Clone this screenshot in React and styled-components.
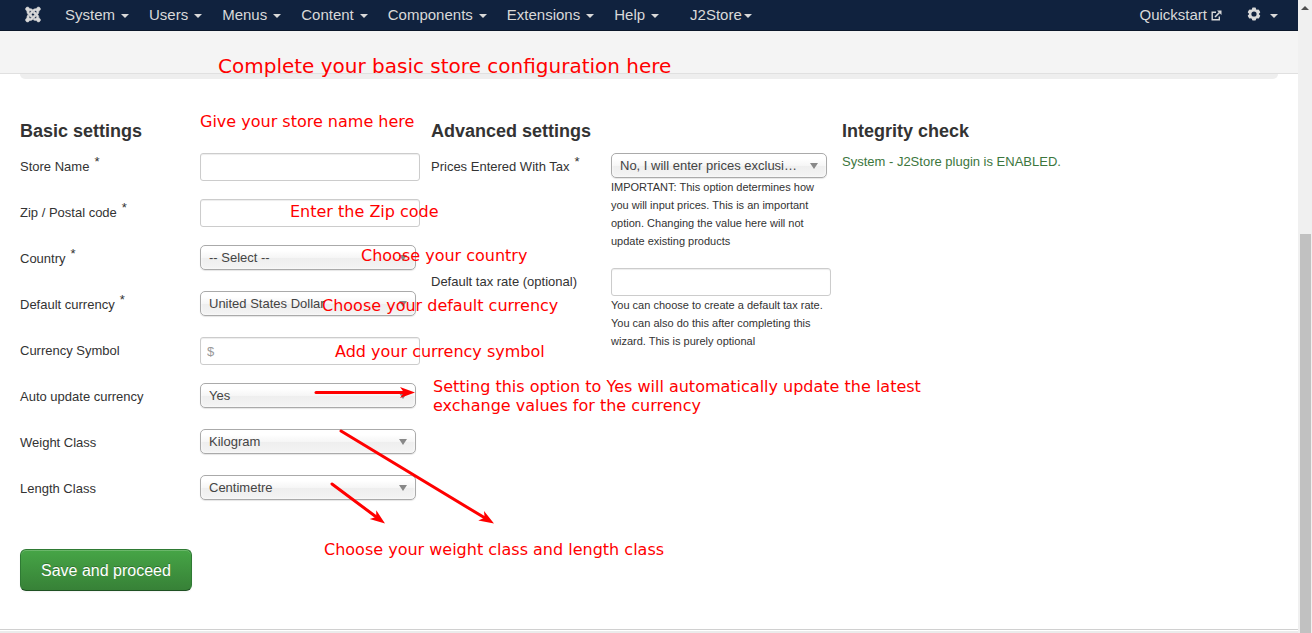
import React from "react";
import styled, { createGlobalStyle } from "styled-components";
import { FaJoomla } from "react-icons/fa";

const Global = createGlobalStyle`
  * { box-sizing: border-box; }
  body {
    margin: 0;
    background: #fff;
    color: #333;
    font: 13px/18px "Liberation Sans", Arial, sans-serif;
  }
`;

const Window = styled.div`
  position: relative;
  display: grid;
  grid-template-columns: minmax(0, 1fr) 14px;
  min-height: 100vh;
`;

const Page = styled.div`
  display: flex;
  flex-direction: column;
`;

const Navbar = styled.nav`
  display: flex;
  align-items: center;
  height: 31px;
  padding: 0 10px 0 25px;
  background: #10223e;
  border-bottom: 1px solid #0b172a;
  font-size: 15px;
`;

const Brand = styled.a`
  display: flex;
  justify-content: center;
  width: 16px;
  margin: 0 14px 2px 0;
  color: #d9d9d9;
  path {
    stroke: currentColor;
    stroke-width: 18px;
  }
`;

const NavLink = styled.a`
  display: flex;
  align-items: center;
  gap: ${(p) => p.$gap ?? 6}px;
  padding: 0 10px;
  color: #d9d9d9;
  text-decoration: none;
  white-space: nowrap;
`;

const MenuGroup = styled.div`
  display: flex;
  margin-left: ${(p) => (p.$push ? "auto" : `${p.$space ?? 0}px`)};
`;

const Caret = styled.span`
  margin-top: 2px;
  border: 4px solid transparent;
  border-top-color: currentColor;
  border-bottom: 0;
`;

const Subhead = styled.div`
  height: 43px;
  background: #f4f4f4;
  border-bottom: 1px solid #e0e0e0;
`;

const Main = styled.main`
  flex: 1;
  padding: 0 20px 38px;
`;

const ProgressWell = styled.div`
  height: 5px;
  margin-bottom: 43px;
  background: #eee;
  border-radius: 0 0 6px 6px;
`;

const Columns = styled.div`
  display: grid;
  grid-template-columns: 411fr 411fr 436fr;
`;

const Heading = styled.h4`
  margin: 0 0 13px;
  font-size: 18px;
  line-height: 18px;
`;

const FieldRow = styled.div`
  display: grid;
  grid-template-columns: 180px 220px;
  align-items: start;
  min-height: 28px;
  margin-bottom: 18px;
`;

const FieldLabel = styled.label`
  display: flex;
  gap: 5px;
  padding-top: 5px;
`;

const Star = styled.span`
  height: 18px;
  margin-top: -5px;
`;

const TextInput = styled.input`
  display: block;
  width: 100%;
  height: 28px;
  padding: 4px 6px;
  border: 1px solid #ccc;
  border-radius: 3px;
  background: #fff;
  box-shadow: inset 0 1px 1px rgba(0, 0, 0, 0.075);
  color: #555;
  font: inherit;
  &::placeholder { color: #999; }
`;

const SelectBox = styled.div`
  position: relative;
  width: 216px;
  &::after {
    content: "";
    position: absolute;
    top: 10px;
    right: 9px;
    border: 4px solid transparent;
    border-top: 6px solid #888;
    border-bottom: 0;
    pointer-events: none;
  }
`;

const Select = styled.select`
  display: block;
  appearance: none;
  width: 100%;
  height: 25px;
  padding: 0 26px 0 8px;
  border: 1px solid #aaa;
  border-radius: 5px;
  background: linear-gradient(#fff 20%, #f6f6f6 50%, #eee 52%, #f4f4f4 100%);
  box-shadow: inset 0 0 3px #fff, 0 1px 1px rgba(0, 0, 0, 0.1);
  color: #444;
  font: inherit;
  text-overflow: ellipsis;
  white-space: nowrap;
  overflow: hidden;
`;

const Help = styled.small`
  display: block;
  font-size: 11px;
  line-height: 18px;
`;

const Success = styled.p`
  margin: 0;
  color: #3c763d;
`;

const SaveButton = styled.button`
  display: block;
  height: 42px;
  margin-top: 28px;
  padding: 2px 20px 0;
  border: 1px solid #2f7a34;
  border-bottom-color: #1f5123;
  border-radius: 6px;
  background: linear-gradient(#46a546, #378137);
  box-shadow: inset 0 1px 0 rgba(255, 255, 255, 0.2), 0 1px 2px rgba(0, 0, 0, 0.05);
  color: #fff;
  font: 16px/20px "Liberation Sans", Arial, sans-serif;
  text-shadow: 0 -1px 0 rgba(0, 0, 0, 0.25);
`;

const StatusBar = styled.footer`
  height: 4px;
  background: #ebebeb;
  border-top: 1px solid #d0d0d0;
  box-shadow: inset 0 1px 0 #fff;
`;

const ScrollTrack = styled.div`
  display: flex;
  flex-direction: column;
  align-items: center;
  justify-content: space-between;
  background: #f0f0f0;
`;

const ScrollArrow = styled.span`
  margin-top: 6px;
  border: 4px solid transparent;
  border-bottom-color: #505050;
  border-top: 0;
`;

const ScrollThumb = styled.div`
  width: 11px;
  height: 63%;
  background: #c1c1c1;
`;

const Notes = styled.div`
  position: absolute;
  inset: 0;
  overflow: hidden;
  pointer-events: none;
`;

const Note = styled.span`
  position: absolute;
  left: ${(p) => p.$x}px;
  top: ${(p) => p.$y}px;
  color: #f00;
  font-family: "DejaVu Sans", sans-serif;
  font-size: ${(p) => (p.$large ? 20 : 16)}px;
  line-height: 19px;
  white-space: pre;
`;

const Arrows = styled.svg`
  position: absolute;
  left: 0;
  top: 0;
`;

const GearSvg = styled.svg`
  margin-bottom: 2px;
`;

const MENUS = ["System", "Users", "Menus", "Content", "Components", "Extensions", "Help"];

const BASIC = [
  { id: "store", label: "Store Name", required: true },
  { id: "zip", label: "Zip / Postal code", required: true },
  { id: "country", label: "Country", required: true, option: "-- Select --" },
  { id: "currency", label: "Default currency", required: true, option: "United States Dollar" },
  { id: "symbol", label: "Currency Symbol", placeholder: "$" },
  { id: "auto", label: "Auto update currency", option: "Yes" },
  { id: "weight", label: "Weight Class", option: "Kilogram" },
  { id: "length", label: "Length Class", option: "Centimetre" },
];

const ADVANCED = [
  {
    id: "tax",
    label: "Prices Entered With Tax",
    required: true,
    option: "No, I will enter prices exclusive of tax",
    help: "IMPORTANT: This option determines how you will input prices. This is an important option. Changing the value here will not update existing products",
  },
  {
    id: "rate",
    label: "Default tax rate (optional)",
    help: "You can choose to create a default tax rate. You can also do this after completing this wizard. This is purely optional",
  },
];

const NOTES = [
  { x: 218, y: 57, large: true, text: "Complete your basic store configuration here" },
  { x: 200, y: 112, text: "Give your store name here" },
  { x: 290, y: 202, text: "Enter the Zip code" },
  { x: 361, y: 246, text: "Choose your country" },
  { x: 322, y: 296, text: "Choose your default currency" },
  { x: 335, y: 342, text: "Add your currency symbol" },
  { x: 433, y: 377, text: "Setting this option to Yes will automatically update the latest\nexchange values for the currency" },
  { x: 324, y: 540, text: "Choose your weight class and length class" },
];

const ARROWS = [
  [316, 392.5, 415, 392.5],
  [341, 431, 494, 523.5],
  [332, 484, 385, 523.5],
];

function Arrow({ from: [x1, y1, x2, y2] }) {
  const length = Math.hypot(x2 - x1, y2 - y1);
  const angle = (Math.atan2(y2 - y1, x2 - x1) * 180) / Math.PI;
  return (
    <g transform={`translate(${x2} ${y2}) rotate(${angle})`} fill="#f00">
      <path d={`M${-length} 0H-10`} stroke="#f00" strokeWidth="3" strokeLinecap="round" />
      <path d="M0 0L-15 -5.5L-11 0L-15 5.5Z" />
    </g>
  );
}

function Field({ id, label, required, option, placeholder, help }) {
  return (
    <FieldRow>
      <FieldLabel htmlFor={id}>
        {label}
        {required && <Star>*</Star>}
      </FieldLabel>
      <div>
        {option ? (
          <SelectBox>
            <Select id={id}>
              <option>{option}</option>
            </Select>
          </SelectBox>
        ) : (
          <TextInput id={id} type="text" placeholder={placeholder} />
        )}
        {help && <Help>{help}</Help>}
      </div>
    </FieldRow>
  );
}

function ExternalIcon() {
  return (
    <svg width="11" height="11" viewBox="0 0 11 11" fill="none" stroke="currentColor" aria-hidden="true">
      <path d="M5 2.2H1.2V9.8H8.3V6.5" strokeWidth="1.4" />
      <path d="M4 7L8.5 2.5" strokeWidth="1.6" />
      <path d="M6 .5H10.5V5Z" fill="currentColor" stroke="none" />
    </svg>
  );
}

function GearIcon() {
  return (
    <GearSvg width="14" height="14" viewBox="0 0 14 14" aria-hidden="true">
      <g fill="currentColor">
        {[0, 60, 120].map((a) => (
          <rect key={a} x="5" y="0.6" width="4" height="12.8" rx="1" transform={`rotate(${a} 7 7)`} />
        ))}
      </g>
      <circle cx="7" cy="7" r="4" fill="none" stroke="currentColor" strokeWidth="2.4" />
      <circle cx="7" cy="7" r="2.6" fill="#10223e" />
    </GearSvg>
  );
}

export default function App() {
  return (
    <Window>
      <Global />
      <Page>
        <Navbar>
          <Brand href="#" aria-label="Joomla"><FaJoomla size={17} /></Brand>
          <MenuGroup>
            {MENUS.map((name) => (
              <NavLink href="#" key={name}>{name}<Caret /></NavLink>
            ))}
          </MenuGroup>
          <MenuGroup $space={11}>
            <NavLink href="#" $gap={2}>J2Store<Caret /></NavLink>
          </MenuGroup>
          <MenuGroup $push>
            <NavLink href="#" $gap={4}>Quickstart<ExternalIcon /></NavLink>
          </MenuGroup>
          <MenuGroup $space={5}>
            <NavLink href="#" $gap={9} aria-label="Settings"><GearIcon /><Caret /></NavLink>
          </MenuGroup>
        </Navbar>
        <Subhead />
        <Main>
          <ProgressWell />
          <form>
            <Columns>
              <section>
                <Heading>Basic settings</Heading>
                {BASIC.map((f) => <Field key={f.id} {...f} />)}
              </section>
              <section>
                <Heading>Advanced settings</Heading>
                {ADVANCED.map((f) => <Field key={f.id} {...f} />)}
              </section>
              <section>
                <Heading>Integrity check</Heading>
                <Success>System - J2Store plugin is ENABLED.</Success>
              </section>
            </Columns>
            <SaveButton type="button">Save and proceed</SaveButton>
          </form>
        </Main>
        <StatusBar />
      </Page>
      <ScrollTrack aria-hidden="true">
        <ScrollArrow />
        <ScrollThumb />
      </ScrollTrack>
      <Notes>
        {NOTES.map((n) => (
          <Note key={n.text} $x={n.x} $y={n.y} $large={n.large}>{n.text}</Note>
        ))}
        <Arrows width="100%" height="100%" aria-hidden="true">
          {ARROWS.map((a) => <Arrow key={a.join()} from={a} />)}
        </Arrows>
      </Notes>
    </Window>
  );
}
